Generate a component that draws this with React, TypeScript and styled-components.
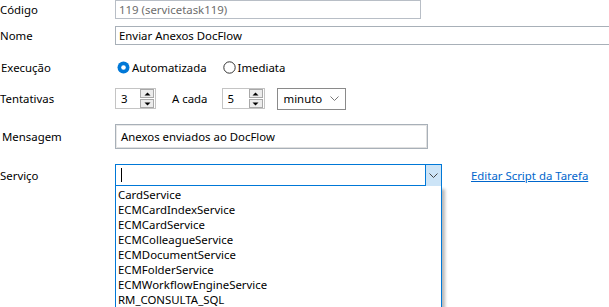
import React from "react";
import styled, { createGlobalStyle } from "styled-components";

const Global = createGlobalStyle`
  html, body { margin: 0; padding: 0; background: #fff; }
  body { font-family: "Noto Sans", "Open Sans", sans-serif; font-size: 11.4px; color: #000; overflow: hidden; }
`;

const Page = styled.div`
  position: relative;
  width: 609px;
  height: 307px;
  overflow: hidden;
`;

const Row = styled.div<{ $h: number; $mt: number }>`
  display: flex;
  align-items: center;
  height: ${(p) => p.$h}px;
  margin-top: ${(p) => p.$mt}px;
`;

const Label = styled.div<{ $indent?: number }>`
  width: 115px;
  flex: none;
  padding-left: ${(p) => p.$indent ?? 0}px;
  box-sizing: border-box;
  white-space: nowrap;
`;

const TextBox = styled.div<{ $w: number; $h: number; $disabled?: boolean; $sunken?: boolean }>`
  box-sizing: border-box;
  width: ${(p) => p.$w}px;
  height: ${(p) => p.$h}px;
  border: 1px solid ${(p) => (p.$disabled ? "#b8bec6" : "#a8b0b8")};
  box-shadow: ${(p) => (p.$sunken ? "inset 1px 1px 0 #e8e8e8, inset -1px -1px 0 #e0e0e0" : "none")};
  color: ${(p) => (p.$disabled ? "#6d6d6d" : "#000")};
  display: flex;
  align-items: center;
  padding-left: ${(p) => (p.$sunken ? 5 : 3)}px;
  white-space: nowrap;
  flex: none;
`;

const RadioGroup = styled.div`
  display: flex;
  align-items: center;
`;

const RadioItem = styled.div<{ $mr?: number }>`
  display: flex;
  align-items: center;
  gap: 2px;
  margin-right: ${(p) => p.$mr ?? 0}px;
`;

const Spin = styled.div<{ $w: number }>`
  box-sizing: border-box;
  width: ${(p) => p.$w}px;
  height: 21px;
  border: 1px solid #c4c4c4;
  display: flex;
  align-items: center;
  justify-content: space-between;
  padding-left: 5px;
  padding-right: 1px;
  flex: none;
`;

const SpinButtons = styled.div`
  display: flex;
  flex-direction: column;
  gap: 1px;
`;

const SpinButton = styled.div`
  box-sizing: border-box;
  width: 14px;
  height: 9px;
  border: 1px solid #a8a8a8;
  background: #ececec;
  display: flex;
  align-items: center;
  justify-content: center;
`;

const Text = styled.span<{ $ml?: number; $mr?: number }>`
  display: inline-flex;
  margin-left: ${(p) => p.$ml ?? 0}px;
  margin-right: ${(p) => p.$mr ?? 0}px;
  white-space: nowrap;
`;

const Select = styled.div`
  box-sizing: border-box;
  width: 69px;
  height: 22px;
  border: 1px solid #8a8a8a;
  display: flex;
  align-items: center;
  justify-content: space-between;
  padding: 0 6px 0 6px;
  flex: none;
`;

const Combo = styled.div`
  position: relative;
  box-sizing: border-box;
  width: 327px;
  height: 23px;
  border: 1px solid #0078d7;
  border-bottom-width: 2px;
  display: flex;
  align-items: center;
  flex: none;
`;

const Caret = styled.div`
  width: 1px;
  height: 14px;
  background: #000;
  margin-left: 5px;
`;

const ComboButton = styled.div`
  position: absolute;
  right: -1px;
  top: -1px;
  bottom: -2px;
  width: 17px;
  box-sizing: border-box;
  border: 1px solid #0078d7;
  background: #cce4f7;
  display: flex;
  align-items: center;
  justify-content: center;
`;

const ListBox = styled.div`
  position: absolute;
  left: -1px;
  top: 21px;
  width: 327px;
  height: 140px;
  box-sizing: border-box;
  background: #fff;
  border-left: 1px solid #0078d7;
  border-right: 1px solid #0078d7;
  box-shadow: 3px 3px 3px rgba(0, 0, 0, 0.28);
  padding-top: 1px;
  z-index: 5;
`;

const ListItem = styled.div`
  height: 15px;
  line-height: 15px;
  padding-left: 2px;
  white-space: nowrap;
`;

const Link = styled.a`
  color: #0066cc;
  text-decoration: underline;
  margin-left: 29px;
  white-space: nowrap;
  cursor: pointer;
`;

const Up = () => (
  <svg width="7" height="4" viewBox="0 0 7 4"><path d="M0.5 3.5 L3.5 0.5 L6.5 3.5 Z" fill="#000" /></svg>
);
const Down = () => (
  <svg width="7" height="4" viewBox="0 0 7 4"><path d="M0.5 0.5 L3.5 3.5 L6.5 0.5 Z" fill="#000" /></svg>
);
const Chevron = ({ color }: { color: string }) => (
  <svg width="9" height="5" viewBox="0 0 9 5"><path d="M0.5 0.5 L4.5 4.5 L8.5 0.5" fill="none" stroke={color} strokeWidth="1" /></svg>
);

const RadioOn = () => (
  <svg width="13" height="13" viewBox="0 0 13 13">
    <circle cx="6.5" cy="6.5" r="6" fill="#0078d7" />
    <circle cx="6.5" cy="6.5" r="2.3" fill="#fff" />
  </svg>
);
const RadioOff = () => (
  <svg width="13" height="13" viewBox="0 0 13 13">
    <circle cx="6.5" cy="6.5" r="5.7" fill="#fff" stroke="#333" strokeWidth="1" />
  </svg>
);

const SpinBox = ({ value, width }: { value: string; width: number }) => (
  <Spin $w={width}>
    <span>{value}</span>
    <SpinButtons>
      <SpinButton><Up /></SpinButton>
      <SpinButton><Down /></SpinButton>
    </SpinButtons>
  </Spin>
);

const services = [
  "CardService",
  "ECMCardIndexService",
  "ECMCardService",
  "ECMColleagueService",
  "ECMDocumentService",
  "ECMFolderService",
  "ECMWorkflowEngineService",
  "RM_CONSULTA_SQL",
];

export default function App() {
  return (
    <Page>
      <Global />
      <Row $h={19} $mt={0}>
        <Label>Código</Label>
        <TextBox $w={306} $h={19} $disabled>119 (servicetask119)</TextBox>
      </Row>
      <Row $h={19} $mt={7}>
        <Label>Nome</Label>
        <TextBox $w={520} $h={19}>Enviar Anexos DocFlow</TextBox>
      </Row>
      <Row $h={14} $mt={15}>
        <Label $indent={1}>Execução</Label>
        <RadioGroup>
          <RadioItem $mr={16}>
            <Text $ml={2}><RadioOn /></Text>
            <Text>Automatizada</Text>
          </RadioItem>
          <RadioItem>
            <RadioOff />
            <Text>Imediata</Text>
          </RadioItem>
        </RadioGroup>
      </Row>
      <Row $h={21} $mt={14}>
        <Label>Tentativas</Label>
        <SpinBox value="3" width={41} />
        <Text $ml={16} $mr={14}>A cada</Text>
        <SpinBox value="5" width={43} />
        <Text $ml={12} />
        <Select>
          <span>minuto</span>
          <Chevron color="#777" />
        </Select>
      </Row>
      <Row $h={25} $mt={15}>
        <Label $indent={2}>Mensagem</Label>
        <TextBox $w={313} $h={25} $sunken>Anexos enviados ao DocFlow</TextBox>
      </Row>
      <Row $h={23} $mt={15}>
        <Label>Serviço</Label>
        <Combo>
          <Caret />
          <ComboButton><Chevron color="#444" /></ComboButton>
          <ListBox>
            {services.map((s) => (
              <ListItem key={s}>{s}</ListItem>
            ))}
          </ListBox>
        </Combo>
        <Link>Editar Script da Tarefa</Link>
      </Row>
    </Page>
  );
}
